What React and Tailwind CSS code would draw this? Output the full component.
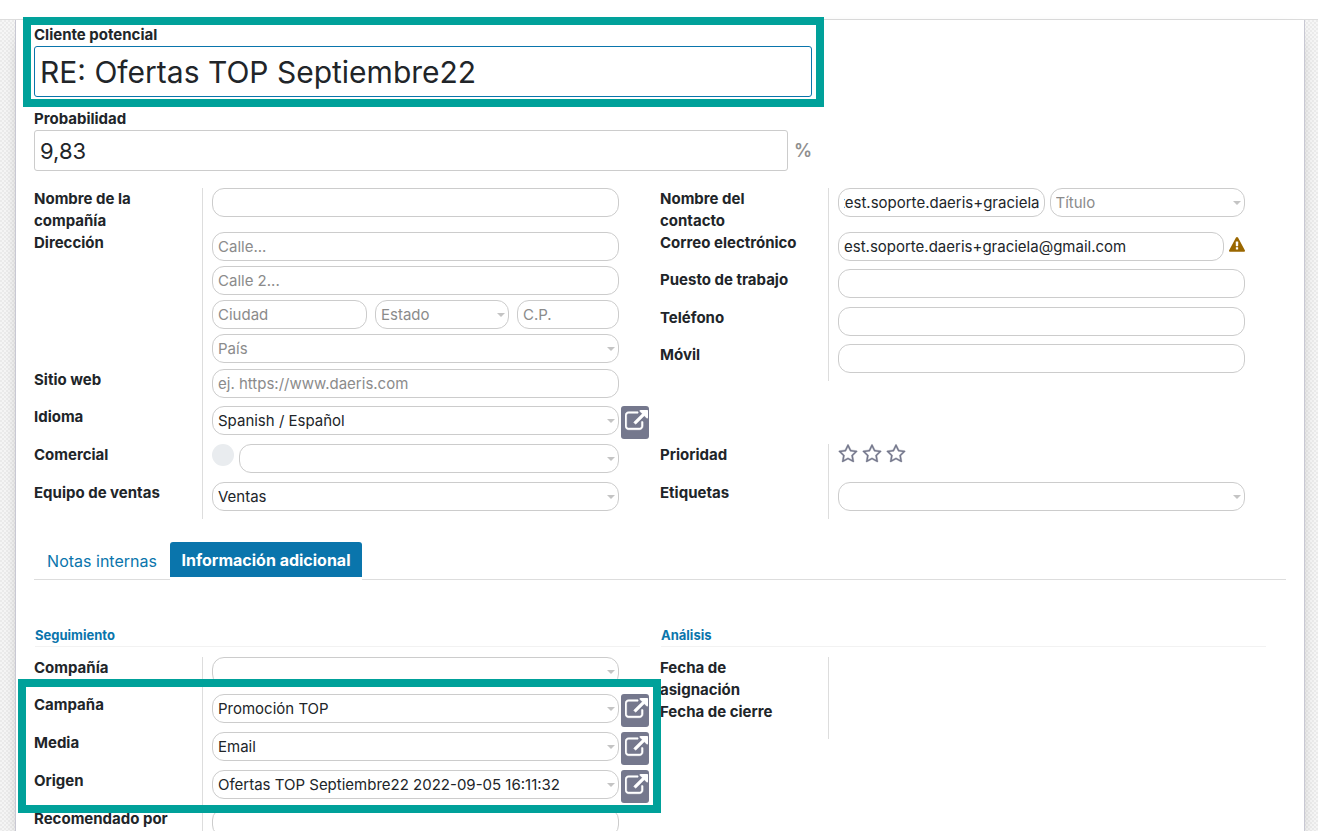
import { useEffect, useId, useRef } from "react";

const FIELD =
  "block h-[29px] w-full min-w-0 rounded-xl border border-[#ccc] bg-white px-[5px] text-[15px] leading-[22px] outline-none placeholder:text-[#8b8b8b]";

function TextField({ id, label, placeholder, value = "", scrollToEnd = false }) {
  const ref = useRef(null);
  useEffect(() => {
    if (scrollToEnd && ref.current) ref.current.scrollLeft = ref.current.scrollWidth;
  }, [scrollToEnd]);
  return (
    <input
      ref={ref}
      id={id}
      type="text"
      aria-label={label}
      placeholder={placeholder}
      defaultValue={value}
      className={`${FIELD} text-[#212529]`}
    />
  );
}

function SelectField({ id, label, value = "", placeholder = "" }) {
  return (
    <div className="relative w-full min-w-0">
      <select
        id={id}
        aria-label={label}
        className={`${FIELD} appearance-none ${value ? "text-[#212529]" : "text-[#8b8b8b]"}`}
      >
        <option>{value || placeholder}</option>
      </select>
      <svg
        viewBox="0 0 8 4"
        className="pointer-events-none absolute right-1 top-[13px] h-1 w-2 fill-[#c4c4c4]"
        aria-hidden="true"
      >
        <path d="M0 0h8L4 4z" />
      </svg>
    </div>
  );
}

function ExternalLink({ label }) {
  return (
    <button
      type="button"
      aria-label={label}
      className="ml-[2px] flex h-[33px] w-7 items-start rounded-[3px] bg-[#75788d] pl-1 pt-1"
    >
      <svg
        viewBox="0 0 1792 1792"
        className="h-[23px] w-[23px] shrink-0 fill-white stroke-white stroke-[40]"
        aria-hidden="true"
      >
        <path d="M1408 928v320q0 119-84.500 203.500t-203.500 84.500h-832q-119 0-203.500-84.500t-84.500-203.500v-832q0-119 84.500-203.500t203.500-84.500h704q14 0 23 9t9 23v64q0 14-9 23t-23 9h-704q-66 0-113 47t-47 113v832q0 66 47 113t113 47h832q66 0 113-47t47-113v-320q0-14 9-23t23-9h64q14 0 23 9t9 23zm384-864v512q0 26-19 45t-45 19-45-19l-176-176-652 652q-10 10-23 10t-23-10l-114-114q-10-10-10-23t10-23l652-652-176-176q-19-19-19-45t19-45 45-19h512q26 0 45 19t19 45z" />
      </svg>
    </button>
  );
}

function Star({ label }) {
  return (
    <button type="button" aria-label={label} className="h-5 w-5">
      <svg viewBox="0 0 1792 1792" className="h-5 w-5 fill-[#75788d] stroke-[#75788d] stroke-[30]" aria-hidden="true">
        <path d="M1201 1004l306-297-422-62-189-382-189 382-422 62 306 297-73 421 378-199 377 199zm527-357q0 22-26 48l-363 354 86 500q1 7 1 20 0 50-41 50-19 0-40-12l-449-236-449 236q-22 12-40 12-21 0-31.500-14.500t-10.500-35.500q0-6 2-20l86-500-364-354q-25-27-25-48 0-37 56-46l502-73 225-455q19-41 49-41t49 41l225 455 502 73q56 9 56 46z" />
      </svg>
    </button>
  );
}

function Warning() {
  return (
    <svg
      viewBox="0 0 1792 1792"
      role="img"
      aria-label="Aviso"
      className="mb-[3px] h-4 w-4 shrink-0 fill-[#9a6700]"
    >
      <path d="M1024 1375v-190q0-14-9.500-23.500t-22.500-9.500h-192q-13 0-22.500 9.500t-9.500 23.500v190q0 14 9.500 23.500t22.500 9.500h192q13 0 22.500-9.500t9.500-23.500zm-2-374l18-459q0-12-10-19-13-11-24-11h-220q-11 0-24 11-10 7-10 21l17 457q0 10 10 16.500t24 6.500h185q14 0 23.500-6.500t10.500-16.500zm-14-934l768 1408q35 63-2 126-17 29-46.500 46t-63.500 17h-1536q-34 0-63.500-17t-46.500-46q-37-63-2-126l768-1408q17-31 47-49t65-18 65 18 47 49z" />
    </svg>
  );
}

function Row({ label, height = "h-[38px]", link, children }) {
  const id = useId();
  return (
    <div className={`flex ${height}`}>
      <label htmlFor={id} className="w-[168px] shrink-0 text-[15px] font-bold leading-[22px]">
        <span className="block w-max max-w-[146px]">{label}</span>
      </label>
      <div className="min-w-0 flex-1 border-l border-[#ddd] pl-[9px]">
        {typeof children === "function" ? children(id) : children}
      </div>
      <div className="w-[41px] shrink-0">{link && <ExternalLink label={link} />}</div>
    </div>
  );
}

function Highlight({ place }) {
  return <div className={`pointer-events-none absolute z-10 border-8 border-[#00a19a] ${place}`} />;
}

function SectionTitle({ children }) {
  return (
    <h2 className="mb-[10px] ml-px mr-5 border-b border-[#f2f2f2] pb-px text-[13px] font-bold leading-5 text-[#0a75ac]">
      {children}
    </h2>
  );
}

export default function App() {
  return (
    <div className="h-screen overflow-y-auto bg-[#f0f0f0] bg-[conic-gradient(#f6f6f6_25%,#ebebeb_0_50%,#f6f6f6_0_75%,#ebebeb_0)] bg-[length:4px_4px] font-['Inter','Noto_Sans',sans-serif] text-[#212529] [scrollbar-width:none]">
      <div className="h-5 border-b border-[#ddd] bg-white" />
      <main className="ml-[15px] mr-[13px] border-x border-[#c8c8d3] bg-white px-[18px] pt-1 shadow-[0_5px_20px_-15px_#000]">
        <div className="w-full max-w-[778px]">
          <div className="relative">
            <label htmlFor="lead" className="block text-[15px] font-bold leading-[22px]">
              Cliente potencial
            </label>
            <input
              id="lead"
              type="text"
              defaultValue="RE: Ofertas TOP Septiembre22"
              className="block h-[51px] w-full rounded-[3px] border border-[#0a75ac] px-[5px] text-[30px] outline-none"
            />
            <Highlight place="-bottom-[10px] -left-[11px] -right-3 -top-[7px]" />
          </div>
          <label htmlFor="probability" className="mt-[11px] block text-[15px] font-bold leading-[22px]">
            Probabilidad
          </label>
          <div className="flex items-center gap-[6px]">
            <input
              id="probability"
              type="text"
              defaultValue="9,83"
              className="block h-[41px] min-w-0 flex-1 rounded-[3px] border border-[#ccc] px-[5px] text-[22px] outline-none"
            />
            <span className="text-lg font-semibold text-[#8f8f8f]">%</span>
          </div>
        </div>

        <div className="mt-[17px] grid grid-cols-2 items-start">
          <div>
            <Row label="Nombre de la compañía" height="h-[44px]">
              {(id) => <TextField id={id} />}
            </Row>
            <Row label="Dirección" height="h-[137px]">
              {(id) => (
                <div className="flex flex-col gap-[5px]">
                  <TextField id={id} placeholder="Calle..." />
                  <TextField label="Calle 2" placeholder="Calle 2..." />
                  <div className="grid grid-cols-[155fr_134fr_102fr] gap-2">
                    <TextField label="Ciudad" placeholder="Ciudad" />
                    <SelectField label="Estado" placeholder="Estado" />
                    <TextField label="Código postal" placeholder="C.P." />
                  </div>
                  <SelectField label="País" placeholder="País" />
                </div>
              )}
            </Row>
            <Row label="Sitio web" height="h-[37px]">
              {(id) => <TextField id={id} placeholder="ej. https://www.daeris.com" />}
            </Row>
            <Row label="Idioma" link="Abrir idioma">
              {(id) => <SelectField id={id} value="Spanish / Español" />}
            </Row>
          </div>
          <div>
            <Row label="Nombre del contacto" height="h-[44px]">
              {(id) => (
                <div className="grid grid-cols-[206fr_195fr] gap-[5px]">
                  <TextField id={id} value="test.soporte.daeris+graciela" scrollToEnd />
                  <SelectField label="Título" placeholder="Título" />
                </div>
              )}
            </Row>
            <Row label="Correo electrónico" height="h-[37px]">
              {(id) => (
                <div className="flex items-center gap-[5px]">
                  <TextField id={id} value="est.soporte.daeris+graciela@gmail.com" />
                  <Warning />
                </div>
              )}
            </Row>
            <Row label="Puesto de trabajo">{(id) => <TextField id={id} />}</Row>
            <Row label="Teléfono" height="h-[37px]">
              {(id) => <TextField id={id} />}
            </Row>
            <Row label="Móvil" height="h-[37px]">
              {(id) => <TextField id={id} />}
            </Row>
          </div>
        </div>

        <div className="grid grid-cols-2 items-start">
          <div>
            <Row label="Comercial">
              {(id) => (
                <div className="flex items-start gap-[5px]">
                  <span className="size-[22px] shrink-0 rounded-full bg-[#e9ecef]" />
                  <SelectField id={id} />
                </div>
              )}
            </Row>
            <Row label="Equipo de ventas" height="h-[37px]">
              {(id) => <SelectField id={id} value="Ventas" />}
            </Row>
          </div>
          <div>
            <Row label="Prioridad">
              <div className="flex gap-1">
                <Star label="Media" />
                <Star label="Alta" />
                <Star label="Muy alta" />
              </div>
            </Row>
            <Row label="Etiquetas" height="h-[37px]">
              {(id) => <SelectField id={id} />}
            </Row>
          </div>
        </div>

        <div role="tablist" className="mt-[23px] flex h-[38px] items-start border-b border-[#ddd]">
          <button type="button" role="tab" aria-selected="false" className="h-[37px] w-[136px] text-base text-[#0a75ac]">
            Notas internas
          </button>
          <button
            type="button"
            role="tab"
            aria-selected="true"
            className="box-content h-[35px] w-[192px] rounded-t-[3px] border-b-[3px] border-white bg-[#0a75ac] text-base font-bold text-white"
          >
            Información adicional
          </button>
        </div>

        <div className="mt-[45px] grid grid-cols-2 items-start">
          <div>
            <SectionTitle>Seguimiento</SectionTitle>
            <Row label="Compañía" height="h-[37px]">
              {(id) => <SelectField id={id} />}
            </Row>
            <div className="relative">
              <Row label="Campaña" link="Abrir campaña">
                {(id) => <SelectField id={id} value="Promoción TOP" />}
              </Row>
              <Row label="Media" link="Abrir media">
                {(id) => <SelectField id={id} value="Email" />}
              </Row>
              <Row label="Origen" link="Abrir origen">
                {(id) => <SelectField id={id} value="Ofertas TOP Septiembre22 2022-09-05 16:11:32" />}
              </Row>
              <Highlight place="-bottom-[5px] -left-4 -right-px -top-[15px]" />
            </div>
            <Row label="Recomendado por">{(id) => <TextField id={id} />}</Row>
          </div>
          <div>
            <SectionTitle>Análisis</SectionTitle>
            <Row label="Fecha de asignación" height="h-[44px]" />
            <Row label="Fecha de cierre" />
          </div>
        </div>
      </main>
    </div>
  );
}
